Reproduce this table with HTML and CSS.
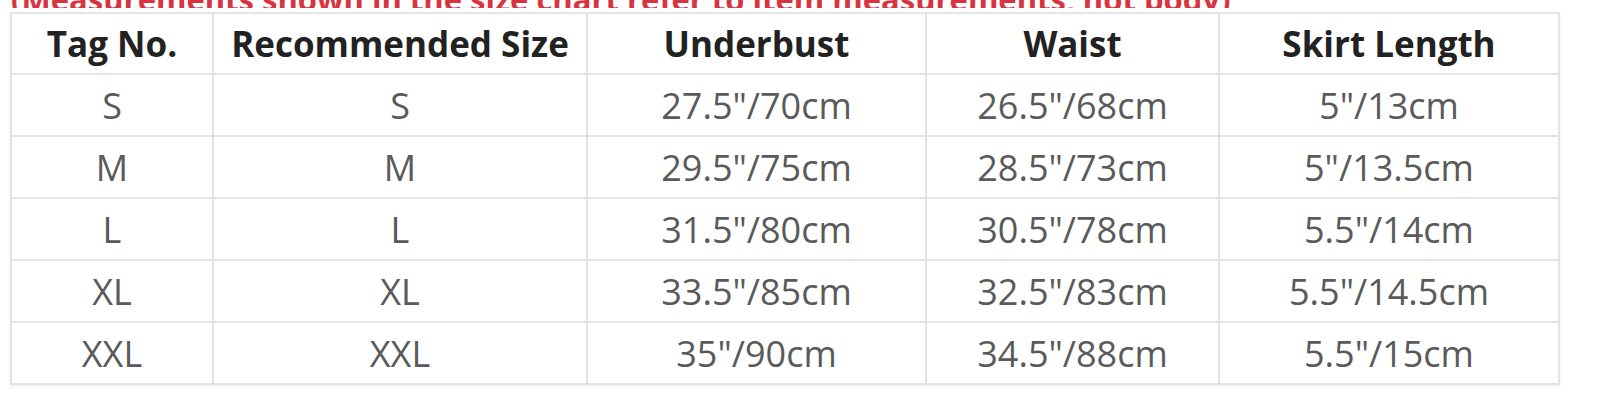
FILE: index.html
```html
<!DOCTYPE html>
<html lang="en">
<head>
<meta charset="utf-8">
<title>Size Chart</title>
<link rel="stylesheet" href="styles.css">
</head>
<body>
<div class="note"><span class="note-text">(Measurements shown in the size chart refer to item measurements, not body)</span></div>
<table class="chart">
  <colgroup>
    <col class="c1"><col class="c2"><col class="c3"><col class="c4"><col class="c5">
  </colgroup>
  <thead>
    <tr><th>Tag No.</th><th>Recommended Size</th><th>Underbust</th><th>Waist</th><th>Skirt Length</th></tr>
  </thead>
  <tbody>
    <tr><td>S</td><td>S</td><td>27.5"/70cm</td><td>26.5"/68cm</td><td>5"/13cm</td></tr>
    <tr><td>M</td><td>M</td><td>29.5"/75cm</td><td>28.5"/73cm</td><td>5"/13.5cm</td></tr>
    <tr><td>L</td><td>L</td><td>31.5"/80cm</td><td>30.5"/78cm</td><td>5.5"/14cm</td></tr>
    <tr><td>XL</td><td>XL</td><td>33.5"/85cm</td><td>32.5"/83cm</td><td>5.5"/14.5cm</td></tr>
    <tr><td>XXL</td><td>XXL</td><td>35"/90cm</td><td>34.5"/88cm</td><td>5.5"/15cm</td></tr>
  </tbody>
</table>
</body>
</html>
```
FILE: styles.css
```css
html, body {
  margin: 0;
  padding: 0;
  background: #ffffff;
}
body {
  font-family: "Open Sans", "Liberation Sans", sans-serif;
  width: 1600px;
  height: 406px;
  overflow: hidden;
}
.note {
  height: 8px;
  overflow: hidden;
  display: flex;
  align-items: flex-end;
  padding-left: 11px;
}
.note-text {
  font-size: 31px;
  font-weight: 700;
  line-height: 1;
  color: #d8343f;
  white-space: nowrap;
  transform: translateY(7px);
}
.chart {
  margin: 4px 0 0 10px;
  border-collapse: collapse;
  table-layout: fixed;
  width: 1548px;
  box-shadow: 0 2px 3px rgba(0,0,0,0.06);
}
.c1 { width: 202px; }
.c2 { width: 374px; }
.c3 { width: 339px; }
.c4 { width: 293px; }
.c5 { width: 340px; }
.chart th, .chart td {
  border: 2px solid #e4e4e4;
  text-align: center;
  padding: 0;
  white-space: nowrap;
}
.chart th {
  height: 59px;
  font-size: 35px;
  font-weight: 700;
  color: #222222;
}
.chart td {
  height: 60px;
  font-size: 36px;
  font-weight: 400;
  color: #5a5a5a;
}
```
